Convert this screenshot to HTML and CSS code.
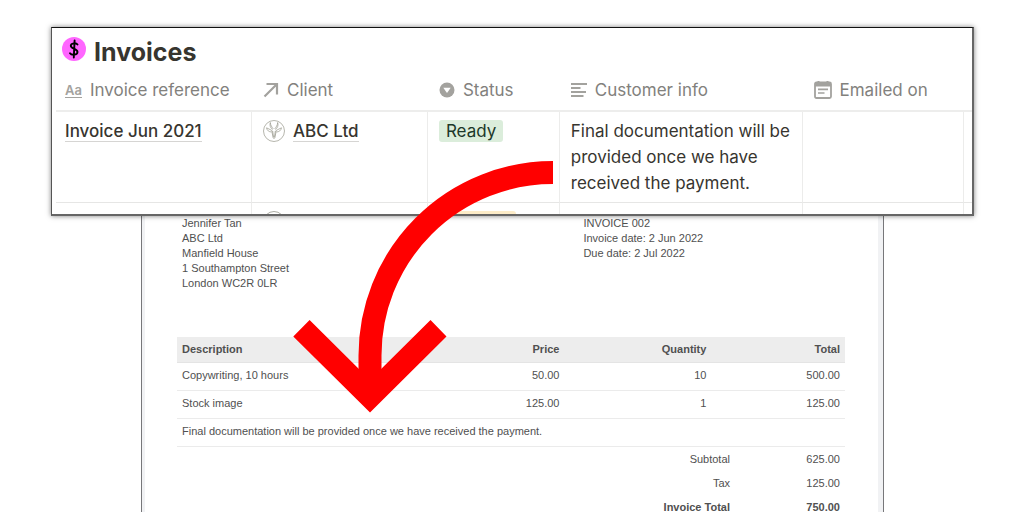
FILE: index.html
```
<!DOCTYPE html>
<html lang="en">
<head>
<meta charset="utf-8">
<title>Invoices</title>
<link rel="stylesheet" href="styles.css">
</head>
<body>
<main class="stage">
  <section class="panel">
    <h1 class="title">
      <svg class="coin" viewBox="0 0 24 24" aria-hidden="true"><circle cx="12" cy="12" r="12" fill="#ff66ff"/><path d="M15.500 7.500C14 5.500 9 6 8.800 8.800C8.700 11.800 15.600 11.500 15.500 15C15.400 18.400 9.300 18.300 8 16.200M12.600 3.500L11.800 20.500" fill="none" stroke="#000" stroke-width="1.900" stroke-linecap="round"/></svg>
      Invoices
    </h1>
    <table class="grid">
      <colgroup><col class="g-ref"><col class="g-client"><col class="g-status"><col class="g-info"><col class="g-mail"><col></colgroup>
      <thead>
        <tr>
          <th><span class="head"><span class="aa">Aa</span>Invoice reference</span></th>
          <th><span class="head"><svg class="icon" viewBox="0 0 16 16" aria-hidden="true"><path d="M1.500 14.500L13.500 2.500M3.500 2H14V12.500" fill="none" stroke="#a3a29e" stroke-width="2.200"/></svg>Client</span></th>
          <th><span class="head"><svg class="icon" viewBox="0 0 16 16" aria-hidden="true"><circle cx="8" cy="8" r="7.500" fill="#a3a29e"/><path d="M4.300 5.800H11.700L8 11Z" fill="#fff"/></svg>Status</span></th>
          <th><span class="head"><svg class="icon" viewBox="0 0 16 16" aria-hidden="true"><path d="M0 2H16M0 6H9.500M0 10H15M0 14H12.500" stroke="#a3a29e" stroke-width="2"/></svg>Customer info</span></th>
          <th><span class="head"><svg class="icon calendar" viewBox="0 0 18 18" aria-hidden="true"><path d="M2.500 1.500H15.500Q17 1.500 17 3V15.500Q17 17 15.500 17H2.500Q1 17 1 15.500V3Q1 1.500 2.500 1.500Z" fill="none" stroke="#a3a29e" stroke-width="1.800"/><path d="M1 1.500H17V5.500H1ZM3.500 0H5.500V2H3.500ZM12.500 0H14.500V2H12.500Z" fill="#a3a29e"/><path d="M4 8.300H14M4 12H10.500" stroke="#a3a29e" stroke-width="1.700"/></svg>Emailed on</span></th>
          <th></th>
        </tr>
      </thead>
      <tbody>
        <tr>
          <td><a class="ref" href="#">Invoice Jun 2021</a></td>
          <td><span class="client"><svg class="avatar" viewBox="0 0 22 22" aria-hidden="true"><g fill="none" stroke="#96968a" stroke-width="0.700"><circle cx="11" cy="11" r="10.500"/><path d="M9.600 9.500C7.500 8 6.400 5.500 7.300 2.500C7.500 5.500 9 7 10.300 9M12.400 9.500C14.500 8 15.600 5.500 14.700 2.500C14.500 5.500 13 7 11.700 9M9 10.500L3.500 7.800C4 10.500 6 12 8.700 12M13 10.500L18.500 7.800C18 10.500 16 12 13.300 12M9 10.500L9.200 13L10.200 18L11 18.600L11.800 18L12.800 13L13 10.500M9.700 11L10.500 17M12.300 11L11.500 17"/></g></svg><a class="ref" href="#">ABC Ltd</a></span></td>
          <td><span class="tag ready">Ready</span></td>
          <td>Final documentation will be provided once we have received the payment.</td>
          <td></td>
          <td></td>
        </tr>
        <tr>
          <td></td>
          <td><span class="client"><svg class="avatar" viewBox="0 0 22 22" aria-hidden="true"><circle cx="11" cy="11" r="10.500" fill="none" stroke="#96968a" stroke-width="0.800"/></svg></span></td>
          <td><span class="tag pending"></span></td>
          <td></td>
          <td></td>
          <td></td>
        </tr>
      </tbody>
    </table>
  </section>

  <section class="sheet">
    <div class="parties">
      <address class="address">Jennifer Tan<br>ABC Ltd<br>Manfield House<br>1 Southampton Street<br>London WC2R 0LR</address>
      <div class="meta">INVOICE 002<br>Invoice date: 2 Jun 2022<br>Due date: 2 Jul 2022</div>
    </div>
    <table class="lines">
      <colgroup><col class="l-desc"><col class="l-price"><col class="l-qty"><col class="l-total"></colgroup>
      <thead>
        <tr><th>Description</th><th>Price</th><th>Quantity</th><th>Total</th></tr>
      </thead>
      <tbody>
        <tr><td>Copywriting, 10 hours</td><td>50.00</td><td>10</td><td>500.00</td></tr>
        <tr><td>Stock image</td><td>125.00</td><td>1</td><td>125.00</td></tr>
        <tr><td colspan="4">Final documentation will be provided once we have received the payment.</td></tr>
      </tbody>
    </table>
    <table class="totals">
      <tbody>
        <tr><th>Subtotal</th><td>625.00</td></tr>
        <tr><th>Tax</th><td>125.00</td></tr>
        <tr class="grand"><th>Invoice Total</th><td>750.00</td></tr>
      </tbody>
    </table>
  </section>

  <svg class="arrow" viewBox="293 160 260 253" aria-hidden="true">
    <path d="M553 172.500A183 183 0 0 0 370 355.500V385" fill="none" stroke="#f00" stroke-width="23"/>
    <path d="M370 412.500L293.300 336.500L309.600 320L370 380L430.500 320L446.500 336.500Z" fill="#f00"/>
  </svg>
</main>
</body>
</html>
```

FILE: styles.css
```
* { box-sizing: border-box; }

body {
  margin: 0;
  background: #fff;
}

.stage {
  position: relative;
  height: 100vh;
  overflow: hidden;
  padding: 27px 50px 0 51px;
}

/* Database panel */
.panel {
  position: relative;
  z-index: 1;
  max-height: 189px;
  overflow: hidden;
  padding: 8px 0 0 4px;
  background: #fff;
  border: 1px solid #111;
  border-left-color: #555;
  border-right: 2px solid #666;
  border-bottom: 2px solid #666;
  box-shadow: 0 0 5px rgba(0, 0, 0, 0.5);
  font: 17px/26px Inter, "Liberation Sans", sans-serif;
  color: #37352f;
}

.title {
  display: flex;
  align-items: center;
  gap: 8px;
  margin: 0 0 2px;
  padding-left: 6px;
  font-size: 25px;
  line-height: 32px;
  font-weight: 700;
}

.coin {
  width: 24px;
  height: 24px;
  margin-bottom: 6px;
}

.grid {
  width: 100%;
  table-layout: fixed;
  border-collapse: separate;
  border-spacing: 0;
}

.g-ref { width: 21.4%; }
.g-client { width: 19.2%; }
.g-status { width: 14.4%; }
.g-info { width: 26.5%; }
.g-mail { width: 17.6%; }

.grid th {
  height: 42px;
  padding: 0 11px;
  border-bottom: 2px solid #ededec;
  color: #82817d;
  font-weight: 400;
  text-align: left;
}

.head {
  display: flex;
  align-items: center;
  gap: 8px;
  white-space: nowrap;
}

.icon {
  flex: none;
  width: 16px;
  height: 16px;
}

.calendar {
  width: 18px;
  height: 18px;
}

.aa {
  font-size: 13px;
  line-height: 14px;
  font-weight: 600;
  color: #a3a29e;
  border-bottom: 1px solid #a3a29e;
}

.grid td {
  padding: 6px 11px;
  vertical-align: top;
  border-right: 1px solid #ececeb;
  border-bottom: 1px solid #e6e6e5;
}

.grid th:first-child,
.grid td:first-child { padding-left: 9px; }

.grid td:last-child { border-right: 0; }

.ref {
  color: inherit;
  font-weight: 500;
  text-decoration: none;
  border-bottom: 1px solid #d6d5d3;
}

.client {
  display: flex;
  align-items: center;
  gap: 8px;
  height: 26px;
}

.client .ref { line-height: 20px; }

.avatar {
  width: 22px;
  height: 22px;
}

.tag {
  display: inline-block;
  padding: 0 7px;
  border-radius: 3px;
  line-height: 22px;
}

.ready {
  background: #dbeddb;
  color: #1c3829;
}

.pending {
  width: 77px;
  height: 22px;
  margin-top: 2px;
  background: #fdecc8;
}

/* Printed invoice */
.sheet {
  margin: 0 90px;
  min-height: 100vh;
  padding: 0 38px 0 35px;
  border: solid #77777a;
  border-width: 0 1px;
  box-shadow: inset 3px 0 #f1f2f4, inset -5px 0 #f1f2f4;
  font: 11px/15px "Liberation Sans", Arial, sans-serif;
  color: #505050;
}

.parties {
  display: grid;
  grid-template-columns: 61% 39%;
  padding: 0 5px;
  margin-bottom: 46px;
}

.address { font-style: normal; }

.lines,
.totals {
  width: 100%;
  border-spacing: 0;
  table-layout: fixed;
}

.l-price { width: 22%; }
.l-qty { width: 22%; }
.l-total { width: 20%; }

.lines th,
.lines td {
  height: 28px;
  padding: 0 5px 2px;
  text-align: right;
  border-bottom: 1px solid #ebebeb;
}

.lines th {
  height: 26px;
  padding-bottom: 0;
  background: #ededed;
  border-color: #e4e4e4;
}

.lines th:first-child,
.lines td:first-child { text-align: left; }

.totals th,
.totals td {
  height: 24px;
  padding: 0 5px;
  font-weight: 400;
  text-align: right;
}

.totals td { width: 110px; }

.totals .grand th,
.totals .grand td { font-weight: 700; }

/* Callout arrow lying over both documents */
.arrow {
  position: absolute;
  z-index: 2;
  left: 293px;
  top: 160px;
  width: 260px;
  height: 253px;
}
```
